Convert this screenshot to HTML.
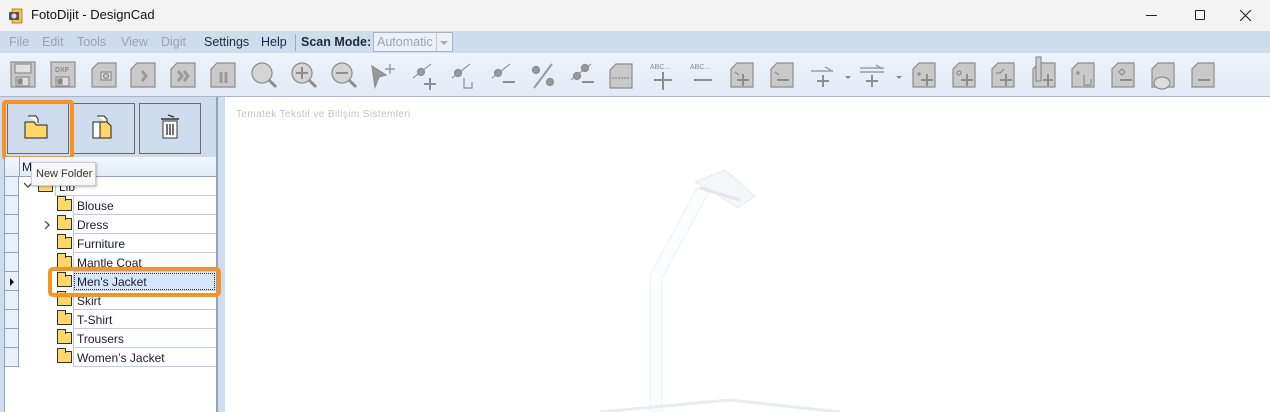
<!DOCTYPE html>
<html><head><meta charset="utf-8"><style>
*{margin:0;padding:0;box-sizing:border-box}
body{width:1270px;height:412px;overflow:hidden;background:#fff;font-family:"Liberation Sans",sans-serif;font-size:12px;position:relative}
.abs{position:absolute}
#title{left:0;top:0;width:1270px;height:31px;background:#f3f3f3}
#menu{left:0;top:31px;width:1270px;height:22px;background:#cfdcec}
#menu span{position:absolute;top:4px;font-size:12.5px;color:#9aa3b0}
#tb{left:0;top:53px;width:1270px;height:44px;background:linear-gradient(#eef3fb,#e3eaf5);border-bottom:1px solid #a8b8cc}
#left{left:0;top:97px;width:225px;height:315px;background:#cfdcee}
.btn{position:absolute;top:6px;width:62px;height:51px;border:1px solid #6b6b6b;background:#cfdcee}
.row{position:absolute;left:5px;width:211px;height:19px}
.rh{position:absolute;left:0;top:0;width:14px;height:19px;background:#e8f0fa;border-right:1px solid #8fa3bd;border-bottom:1px solid #8fa3bd}
.cell{position:absolute;left:68px;top:0;width:143px;height:19px;border-left:1px solid #b9cde8;border-bottom:1px solid #b9cde8;padding:3px 0 0 3px;color:#1b1b30}
.fold{position:absolute;left:52px;top:3px;width:15px;height:12px;background:#fdd867;border:1px solid #333}
.fold:before{content:"";position:absolute;left:-1px;top:-4px;width:7px;height:4px;background:#fdd867;border:1px solid #333;border-bottom:none}
</style></head><body>
<div id="title" class="abs">
 <svg class="abs" style="left:8px;top:8px" width="16" height="16"><rect x="4" y="1" width="10" height="14" fill="#f3c15a" stroke="#b88a2a"/><rect x="1" y="4" width="10" height="8" fill="#555"/><circle cx="6" cy="8" r="2.5" fill="#ddd"/></svg>
 <span class="abs" style="left:31px;top:7px;font-size:13px;color:#111">FotoDijit - DesignCad</span>
 <div class="abs" style="left:1146px;top:15px;width:11px;height:1px;background:#222"></div>
 <div class="abs" style="left:1195px;top:10px;width:10px;height:10px;border:1px solid #222;border-radius:1px"></div>
 <svg class="abs" style="left:1240px;top:10px" width="11" height="11"><path d="M0 0L11 11M11 0L0 11" stroke="#222" stroke-width="1.1"/></svg>
</div>
<div id="menu" class="abs">
 <span style="left:9px">File</span><span style="left:42px">Edit</span><span style="left:77px">Tools</span><span style="left:121px">View</span><span style="left:161px">Digit</span>
 <span style="left:204px;color:#1b2a44">Settings</span><span style="left:261px;color:#1b2a44">Help</span>
 <div class="abs" style="left:295px;top:3px;width:1px;height:17px;background:#9ab"></div>
 <span style="left:301px;color:#1b2a44;font-weight:bold">Scan Mode:</span>
 <div class="abs" style="left:373px;top:1px;width:80px;height:20px;border:1px solid #a6b3c4;background:#edf1f6"></div>
 <span style="left:377px;color:#9aa3b0">Automatic</span>
 <div class="abs" style="left:436px;top:2px;width:1px;height:18px;background:#c0c8d4"></div>
 <svg class="abs" style="left:440px;top:10px" width="8" height="4"><path d="M0 0L8 0L4 4Z" fill="#aab"/></svg>
</div>
<div id="tb" class="abs">
<svg width="1270" height="44" fill="#c9c9c9" stroke="#8d8d8d" stroke-width="1.2">
 <g transform="translate(11,9)"><rect x="0" y="0" width="24" height="25"/><rect x="4" y="2" width="16" height="9" fill="#e0e0e0"/><rect x="5" y="15" width="13" height="9" fill="#e0e0e0"/><rect x="7" y="17" width="4" height="5" fill="#888"/></g>
 <g transform="translate(51,9)"><rect x="0" y="0" width="24" height="25"/><text x="4" y="10" font-size="7" fill="#888" stroke="none" font-weight="bold">DXF</text><rect x="5" y="15" width="13" height="9" fill="#e0e0e0"/><rect x="7" y="17" width="4" height="5" fill="#888"/></g>
 <g transform="translate(92,10)"><path d="M6 0H24V24H0V6Z"/><rect x="9" y="9" width="10" height="8" fill="#ddd"/><circle cx="14" cy="13" r="2.5"/></g>
 <g transform="translate(131,10)"><path d="M6 0H24V24H0V6Z"/><path d="M11 8L15 13L11 18" fill="none" stroke="#999" stroke-width="3"/></g>
 <g transform="translate(171,10)"><path d="M6 0H24V24H0V6Z"/><path d="M7 8L11 13L7 18M13 8L17 13L13 18" fill="none" stroke="#999" stroke-width="3"/></g>
 <g transform="translate(211,10)"><path d="M6 0H24V24H0V6Z"/><path d="M10 9V20M15 9V20" stroke="#999" stroke-width="3"/></g>
 <g transform="translate(251,9)" fill="#d4d4d4"><circle cx="11" cy="11" r="10"/><path d="M18 18L25 25" stroke-width="3"/></g>
 <g transform="translate(291,9)" fill="#d4d4d4"><circle cx="11" cy="11" r="10"/><path d="M18 18L25 25" stroke-width="3"/><path d="M5 11H17M11 5V17" stroke-width="2"/></g>
 <g transform="translate(331,9)" fill="#d4d4d4"><circle cx="11" cy="11" r="10"/><path d="M18 18L25 25" stroke-width="3"/><path d="M5 11H17" stroke-width="2"/></g>
 <g transform="translate(372,9)"><path d="M0 4L14 13L7 15L3 25Z" fill="#999"/><path d="M18 2V12M13 7H23" fill="none"/></g>
 <g transform="translate(411,9)" fill="#999"><path d="M2 16L20 2" stroke="#999"/><circle cx="10" cy="10" r="3.5"/><path d="M13 22H25M19 16V28" stroke-width="2"/></g>
 <g transform="translate(450,9)" fill="#999"><path d="M2 16L20 2" stroke="#999"/><circle cx="8" cy="11" r="3.5"/><path d="M14 16V26H22V20" fill="none"/></g>
 <g transform="translate(490,9)" fill="#999"><path d="M2 16L20 2" stroke="#999"/><circle cx="8" cy="11" r="3.5"/><path d="M13 20H25" stroke-width="2"/></g>
 <g transform="translate(530,9)" fill="#999"><path d="M4 26L22 2" stroke="#999" stroke-width="2"/><circle cx="6" cy="8" r="3.5"/><circle cx="20" cy="20" r="3.5"/></g>
 <g transform="translate(569,9)" fill="#999"><path d="M2 18L22 2" stroke="#999"/><circle cx="8" cy="14" r="3.5"/><circle cx="16" cy="6" r="3.5"/><path d="M13 20H25" stroke-width="2"/></g>
 <g transform="translate(610,11)"><path d="M6 0H22V24H0V6Z"/><path d="M2 14H20" stroke-dasharray="2 1"/></g>
 <g transform="translate(650,9)"><text x="0" y="7" font-size="7" fill="#888" stroke="none">ABC...</text><path d="M4 18H22M13 10V28" stroke-width="2"/></g>
 <g transform="translate(690,9)"><text x="0" y="7" font-size="7" fill="#888" stroke="none">ABC...</text><path d="M4 18H22" stroke-width="2"/></g>
 <g transform="translate(731,10)"><path d="M6 0H22V24H0V6Z"/><path d="M4 9L8 12" fill="none"/><path d="M6 17H18M12 11V23" stroke-width="2"/></g>
 <g transform="translate(771,10)"><path d="M6 0H22V24H0V6Z"/><path d="M4 9L8 12" fill="none"/><path d="M6 17H18" stroke-width="2"/></g>
 <g transform="translate(811,9)"><path d="M0 9H22M14 5L20 8" fill="none"/><path d="M6 19H18M12 13V25" stroke-width="2"/><path d="M34 14L40 14L37 17Z" fill="#888" stroke="none"/></g>
 <g transform="translate(860,9)"><path d="M0 6H24M0 10H24M16 3L22 7" fill="none"/><path d="M6 19H18M12 13V25" stroke-width="2"/><path d="M36 14L42 14L39 17Z" fill="#888" stroke="none"/></g>
 <g transform="translate(913,10)"><path d="M6 0H22V24H0V6Z"/><path d="M8 17H20M14 11V23" stroke-width="2"/><path d="M4 11H8M6 9V13" /></g>
 <g transform="translate(953,10)"><path d="M6 0H22V24H0V6Z"/><path d="M8 17H20M14 11V23" stroke-width="2"/><circle cx="6" cy="10" r="2"/></g>
 <g transform="translate(992,10)"><path d="M6 0H22V24H0V6Z"/><path d="M8 17H20M14 11V23" stroke-width="2"/><path d="M4 10L8 10L12 6" fill="none"/></g>
 <g transform="translate(1033,4)"><path d="M6 6H22V30H0V12Z"/><rect x="3" y="0" width="5" height="24" fill="#ccc"/><path d="M10 23H20M15 17V29" stroke-width="2"/></g>
 <g transform="translate(1072,10)"><path d="M6 0H22V24H0V6Z"/><path d="M12 12V22H19V16" fill="none"/><path d="M4 10H8M6 8V12"/></g>
 <g transform="translate(1112,10)"><path d="M6 0H22V24H0V6Z"/><path d="M8 17H20" stroke-width="2"/><path d="M10 6L13 9L10 12L7 9Z" fill="none"/></g>
 <g transform="translate(1152,10)"><path d="M6 0H22V24H0V6Z"/><ellipse cx="10" cy="20" rx="8" ry="6" fill="#ddd"/></g>
 <g transform="translate(1192,10)"><path d="M6 0H22V24H0V6Z"/><path d="M6 17H18" stroke-width="2"/></g>
</svg>
</div>
<div id="left" class="abs">
 <div class="btn" style="left:7px"></div><div class="btn" style="left:73px"></div><div class="btn" style="left:139px"></div>
 <div class="abs" style="left:2px;top:3px;width:72px;height:60px;border:4px solid #f7931e;border-radius:4px"></div>
 <svg class="abs" style="left:24px;top:18px" width="28" height="26"><path d="M4 1H12L14 4V8" fill="#fff" stroke="#222"/><path d="M1 7H10L12 10H23V23H1Z" fill="#fdd867" stroke="#222"/></svg>
 <svg class="abs" style="left:92px;top:18px" width="24" height="26"><path d="M5 1H12L15 4V8" fill="#fff" stroke="#222"/><path d="M1 7H8V23H1Z" fill="#fff" stroke="#222"/><path d="M8 7H15L19 11V23H8Z" fill="#fdd867" stroke="#222"/></svg>
 <svg class="abs" style="left:160px;top:17px" width="22" height="26"><path d="M8 1L14 3M1 5H19" stroke="#333" stroke-width="1.4"/><rect x="3" y="7" width="14" height="17" fill="#fff" stroke="#333"/><path d="M7 10V21M10 10V21M13 10V21" stroke="#333" stroke-width="1.4"/></svg>
 <div class="abs" style="left:4px;top:60px;width:212px;height:255px;background:#fff;border-left:1px solid #8fa3bd"></div>
 <div class="abs" style="left:216px;top:0;width:2px;height:315px;background:#8fa3bd"></div>
 <div class="abs" style="left:5px;top:60px;width:211px;height:20px;background:linear-gradient(#f4f8fd,#e3ecf8);border-bottom:1px solid #8fa3bd"></div>
 <div class="abs" style="left:19px;top:60px;width:1px;height:20px;background:#8fa3bd"></div>
 <span class="abs" style="left:22px;top:63px;color:#1b1b30">M</span>
</div>
<div class="abs" style="left:0;top:177px;width:216px;height:190px">
 <div class="row" style="top:0"><div class="rh"></div><svg class="abs" style="left:19px;top:5px" width="8" height="6"><path d="M0 1L4 5L8 1" fill="none" stroke="#555" stroke-width="1.4"/></svg><div class="fold" style="left:33px"></div><div class="cell" style="left:50px;width:161px">Lib</div></div>
 <div class="row" style="top:19px"><div class="rh"></div><div class="fold"></div><div class="cell">Blouse</div></div>
 <div class="row" style="top:38px"><div class="rh"></div><svg class="abs" style="left:39px;top:6px" width="6" height="8"><path d="M1 0L5 4L1 8" fill="none" stroke="#555" stroke-width="1.4"/></svg><div class="fold"></div><div class="cell">Dress</div></div>
 <div class="row" style="top:57px"><div class="rh"></div><div class="fold"></div><div class="cell">Furniture</div></div>
 <div class="row" style="top:76px"><div class="rh"></div><div class="fold"></div><div class="cell">Mantle Coat</div></div>
 <div class="row" style="top:95px"><div class="rh"><svg class="abs" style="left:5px;top:6px" width="5" height="8"><path d="M0 0L4 4L0 8Z" fill="#111"/></svg></div><div class="fold"></div><div class="cell" style="background:#d6e6fa;outline:1px dotted #333;outline-offset:-2px">Men's Jacket</div></div>
 <div class="row" style="top:114px"><div class="rh"></div><div class="fold"></div><div class="cell">Skirt</div></div>
 <div class="row" style="top:133px"><div class="rh"></div><div class="fold"></div><div class="cell">T-Shirt</div></div>
 <div class="row" style="top:152px"><div class="rh"></div><div class="fold"></div><div class="cell">Trousers</div></div>
 <div class="row" style="top:171px"><div class="rh"></div><div class="fold"></div><div class="cell">Women’s Jacket</div></div>
</div>
<div class="abs" style="left:48px;top:267px;width:173px;height:30px;border:4px solid #f7931e;border-radius:5px"></div>
<div class="abs" style="left:31px;top:162px;width:65px;height:24px;background:#f7f7f7;border:1px solid #ccc;box-shadow:1px 1px 2px rgba(0,0,0,.25);padding:5px 0 0 4px;font-size:11px;color:#333">New Folder</div>
<span class="abs" style="left:236px;top:109px;font-size:10px;color:#c8c0c0;letter-spacing:.4px">Tematek Tekstil ve Bilişim Sistemleri</span>
<svg class="abs" style="left:560px;top:160px" width="300" height="252">
 <path d="M90 252 L90 115 L137 28 L149 32 L102 118 L102 252Z" fill="#fbfcfe" stroke="#eceff4"/>
 <path d="M135 22L165 10L195 36L178 48L150 30Z" fill="#f5f6f8" stroke="#e6e9ee"/>
 <path d="M140 28L180 40" stroke="#e2e5ea" stroke-width="3"/>
 <path d="M40 252L170 240L280 252" stroke="#e8ecf1" stroke-width="3" fill="none"/>
</svg>
</body></html>
